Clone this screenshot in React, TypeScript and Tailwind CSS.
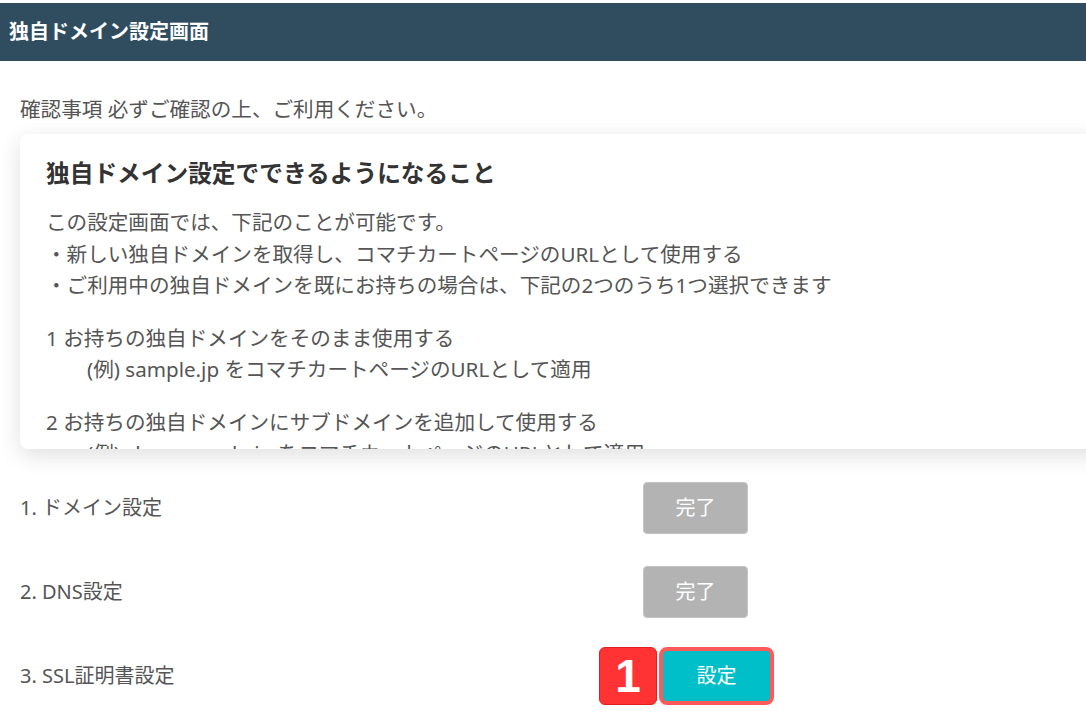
import React from "react";

const font = { fontFamily: '"Noto Sans", "Noto Sans CJK JP", sans-serif' };

function StepRow({ label, children }: { label: string; children: React.ReactNode }) {
  return (
    <div className="flex items-center h-[84px]">
      <div className="w-[643px] pl-5 text-[20px] text-[#555555]">{label}</div>
      {children}
    </div>
  );
}

function DoneButton() {
  return (
    <div className="w-[105px] h-[52px] rounded-[4px] bg-[#b3b3b3] border border-[#c4c4c4] flex items-center justify-center text-white text-[20px]">
      完了
    </div>
  );
}

export default function App() {
  return (
    <div className="w-[1086px] h-[720px] overflow-hidden bg-white pt-[3px] font-['Noto_Sans','Noto_Sans_CJK_JP',sans-serif]">
      <div className="h-[58px] bg-[#304d60] flex items-center pl-[9px] text-white font-bold text-[20px]">
        独自ドメイン設定画面
      </div>

      <p className="pl-5 mt-[32px] h-[41px] leading-[32px] text-[20.6px] text-[#555555]">
        確認事項 必ずご確認の上、ご利用ください。
      </p>

      <div className="ml-5 w-[1100px] h-[315px] overflow-hidden rounded-[8px] bg-white shadow-[0_6px_22px_rgba(0,0,0,0.13)] pl-[26px] pt-[20px]">
        <h2 className="text-[23.7px] leading-[38px] font-bold text-[#333333]">
          独自ドメイン設定でできるようになること
        </h2>
        <div className="mt-[15px] text-[20.6px] leading-[31.5px] text-[#555555]">
          <p>この設定画面では、下記のことが可能です。</p>
          <p>・新しい独自ドメインを取得し、コマチカートページのURLとして使用する</p>
          <p>・ご利用中の独自ドメインを既にお持ちの場合は、下記の2つのうち1つ選択できます</p>
          <p className="mt-[21px]">1 お持ちの独自ドメインをそのまま使用する</p>
          <p className="pl-[41px]">(例) sample.jp をコマチカートページのURLとして適用</p>
          <p className="mt-[21px]">2 お持ちの独自ドメインにサブドメインを追加して使用する</p>
          <p className="pl-[41px]">(例) shop.sample.jp をコマチカートページのURLとして適用</p>
        </div>
      </div>

      <div className="mt-[17px]">
        <StepRow label="1. ドメイン設定">
          <DoneButton />
        </StepRow>
        <StepRow label="2. DNS設定">
          <DoneButton />
        </StepRow>
        <div className="flex items-center h-[84px] relative">
          <div className="w-[599px] pl-5 text-[20px] text-[#555555]">3. SSL証明書設定</div>
          <div className="w-[58px] h-[58px] rounded-[6px] bg-[#ff3333] border border-[#e02020] flex items-center justify-center text-white font-bold text-[46px] font-['Liberation_Sans',sans-serif]">
            1
          </div>
          <div className="ml-[2px] w-[115px] h-[58px] rounded-[8px] border-[4px] border-[#ff5a5a] bg-[#00bfc8] flex items-center justify-center text-white text-[20px]">
            設定
          </div>
        </div>
      </div>
    </div>
  );
}
